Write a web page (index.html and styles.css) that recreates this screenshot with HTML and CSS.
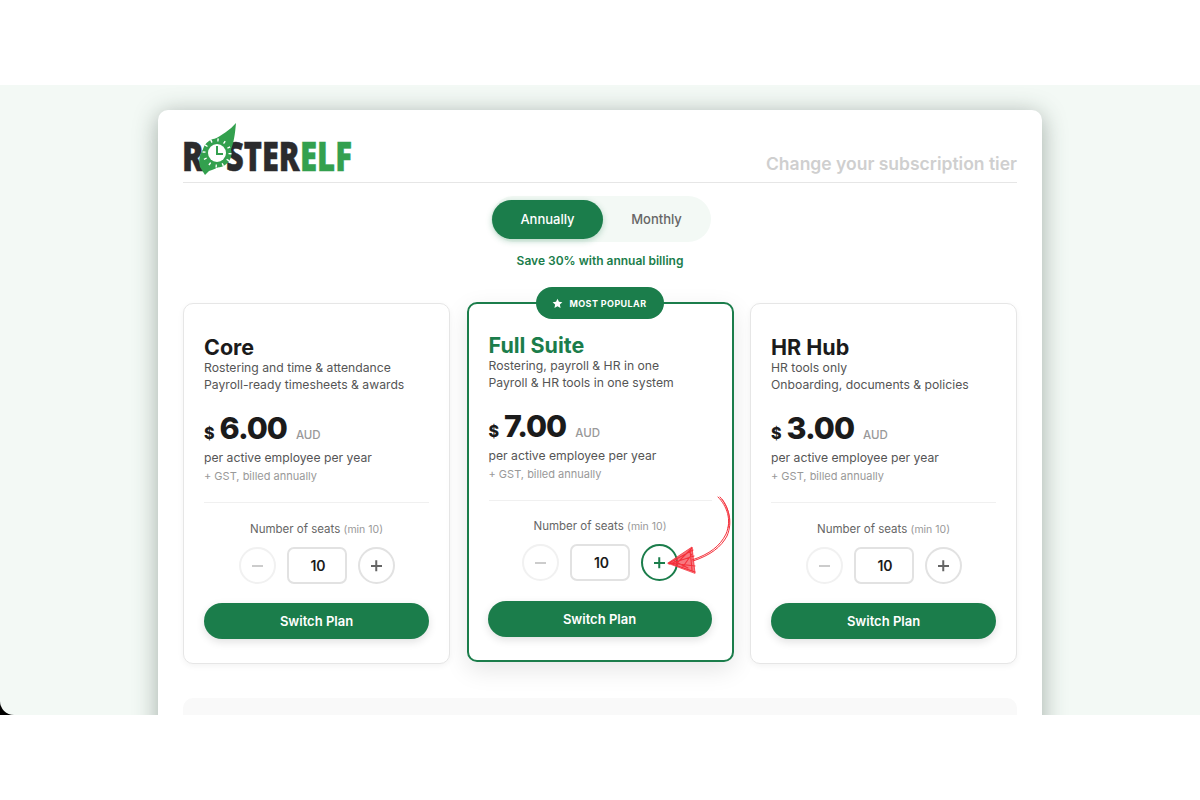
FILE: index.html
```html
<!DOCTYPE html>
<html lang="en">
<head>
      <meta charset="UTF-8">
      <meta name="viewport" content="width=device-width, initial-scale=1.0">
      <title>Change your subscription tier</title>
      <link rel="stylesheet" href="styles.css">
</head>
<body>
      <div class="frame">
            <div class="screen">
                  <main class="sheet">
                        <header class="sheet-head">
                              <svg class="logo" viewBox="0 0 172 64" role="img" aria-label="RosterElf">
                                    <text class="logo-text" transform="translate(-1 50) scale(.78 1)">R</text>
                                    <text class="logo-text" transform="translate(43 50) scale(.75 1)">STER</text>
                                    <text class="logo-text green" transform="translate(117 50) scale(.76 1)">ELF</text>
                                    <path d="M53 2 C52 13 51 22 47 31 C43 42 34 48 26 50 L22 54 L17 46 C14 34 20 26 30 19 C39 14 47 9 53 2 Z" fill="#33a04e"/>
                                    <circle cx="34" cy="32" r="12" fill="none" stroke="#33a04e" stroke-width="5"/>
                                    <circle cx="34" cy="32" r="13" fill="none" stroke="#fff" stroke-width="3" stroke-dasharray="1.400 5.400"/>
                                    <circle cx="34" cy="32" r="9" fill="#fff"/>
                                    <path d="M34 25 V33 H40" fill="none" stroke="#33a04e" stroke-width="2"/>
                              </svg>
                              <h1 class="sheet-title">Change your subscription tier</h1>
                        </header>

                        <div class="billing">
                              <div class="billing-toggle">
                                    <span class="billing-opt active">Annually</span>
                                    <span class="billing-opt">Monthly</span>
                              </div>
                              <p class="billing-note">Save 30% with annual billing</p>
                        </div>

                        <section class="plans">
                              <article class="plan">
                                    <h2>Core</h2>
                                    <p class="plan-desc">Rostering and time &amp; attendance<br>Payroll-ready timesheets &amp; awards</p>
                                    <div class="price"><span class="cur">$</span><span class="amt">6.00</span><span class="aud">AUD</span></div>
                                    <p class="per">per active employee per year</p>
                                    <p class="gst">+ GST, billed annually</p>
                                    <hr class="rule">
                                    <p class="seats">Number of seats <small>(min 10)</small></p>
                                    <div class="stepper">
                                          <span class="step off"><i class="minus"></i></span>
                                          <span class="seat-box">10</span>
                                          <span class="step"><i class="minus"></i><i class="minus upright"></i></span>
                                    </div>
                                    <button class="switch">Switch Plan</button>
                              </article>

                              <article class="plan featured">
                                    <div class="badge">
                                          <svg viewBox="0 0 24 24" aria-hidden="true"><path d="M12 1.500l3.200 6.900 7.500.9-5.500 5.100 1.500 7.400L12 18.100l-6.700 3.700 1.500-7.400L1.300 9.300l7.500-.9z" fill="#fff"/></svg>
                                          MOST POPULAR
                                    </div>
                                    <h2>Full Suite</h2>
                                    <p class="plan-desc">Rostering, payroll &amp; HR in one<br>Payroll &amp; HR tools in one system</p>
                                    <div class="price"><span class="cur">$</span><span class="amt">7.00</span><span class="aud">AUD</span></div>
                                    <p class="per">per active employee per year</p>
                                    <p class="gst">+ GST, billed annually</p>
                                    <hr class="rule">
                                    <p class="seats">Number of seats <small>(min 10)</small></p>
                                    <div class="stepper">
                                          <span class="step off"><i class="minus"></i></span>
                                          <span class="seat-box">10</span>
                                          <span class="step on"><i class="minus"></i><i class="minus upright"></i></span>
                                    </div>
                                    <button class="switch">Switch Plan</button>
                                    <!-- hand drawn arrow pointing at the plus -->
                                    <svg class="scribble" viewBox="0 0 70 80" aria-hidden="true" fill="none" stroke="#f4303a" stroke-linecap="round">
                                          <path d="M52 1 C61 10 66 24 60 38 C54 50 44 58 26 64" stroke-width="1"/>
                                          <path d="M54 1 C63 11 67 26 61 40 C55 51 45 59 27 65" stroke-width="1"/>
                                          <path d="M56 3 C63 12 65 24 62 32" stroke-width=".8"/>
                                          <path d="M2 67 L26 51 L29 77 Z" fill="#f4303a" fill-opacity=".65" stroke-width=".8"/>
                                          <path d="M3 67 L27 54 M3 68 L28 60 M4 67 L29 70 M6 68 L29 76 M26 52 L10 68 M26 58 L16 72 M8 65 L22 72 M24 54 L26 74" stroke-width="1.100"/>
                                    </svg>
                              </article>

                              <article class="plan">
                                    <h2>HR Hub</h2>
                                    <p class="plan-desc">HR tools only<br>Onboarding, documents &amp; policies</p>
                                    <div class="price"><span class="cur">$</span><span class="amt">3.00</span><span class="aud">AUD</span></div>
                                    <p class="per">per active employee per year</p>
                                    <p class="gst">+ GST, billed annually</p>
                                    <hr class="rule">
                                    <p class="seats">Number of seats <small>(min 10)</small></p>
                                    <div class="stepper">
                                          <span class="step off"><i class="minus"></i></span>
                                          <span class="seat-box">10</span>
                                          <span class="step"><i class="minus"></i><i class="minus upright"></i></span>
                                    </div>
                                    <button class="switch">Switch Plan</button>
                              </article>
                        </section>

                        <div class="next-panel"></div>
                  </main>
            </div>
      </div>
</body>
</html>
```

FILE: styles.css
```css
:root {
	--green: #1b7d4b;
	--leaf: #33a04e;
	--mint: #f3f9f5;
	--ink: #1b1b1b;
	--text: #555;
	--muted: #999;
	--line: #e6e6e6;
}
html {
	box-sizing: border-box;
}
*, *:before, *:after {
	box-sizing: inherit;
}
body {
	margin: 0;
	height: 800px;
	background: #fff;
	font-family: Inter, "Open Sans", sans-serif;
	color: var(--ink);
	overflow: hidden;
}
p, h1, h2 {
	margin: 0;
}

/* screenshot band */
.frame {
	margin-top: 85px;
	height: 630px;
	background: linear-gradient(90deg, #000 14px, #fff 14px);
	overflow: hidden;
}
.screen {
	height: 630px;
	background: var(--mint);
	border-bottom-left-radius: 14px;
	padding-top: 25px;
	overflow: hidden;
}
.sheet {
	width: 884px;
	height: 640px;
	margin: 0 auto;
	padding: 0 25px;
	background: #fff;
	border-radius: 10px;
	box-shadow: 0 4px 24px rgba(40, 60, 50, .4);
}

/* header */
.sheet-head {
	height: 73px;
	display: flex;
	justify-content: space-between;
	align-items: flex-end;
	border-bottom: 1px solid var(--line);
}
.logo {
	width: 172px;
	height: 64px;
	margin-bottom: -3px;
}
.logo-text {
	font-family: "Open Sans", sans-serif;
	font-weight: 800;
	font-size: 41px;
	fill: #2b2b2d;
	stroke: #2b2b2d;
	stroke-width: .5px;
}
.logo-text.green {
	fill: var(--leaf);
	stroke: var(--leaf);
}
.sheet-title {
	padding-bottom: 8px;
	font-size: 17.500px;
	line-height: 20px;
	font-weight: 600;
	color: #cfcfcf;
}

/* billing switch */
.billing {
	display: flex;
	flex-direction: column;
	align-items: center;
	padding-top: 13px;
}
.billing-toggle {
	width: 220px;
	height: 46px;
	margin-left: 2px;
	display: flex;
	align-items: center;
	padding: 0 1px;
	background: var(--mint);
	border-radius: 23px;
}
.billing-opt {
	flex: 1;
	height: 39px;
	display: flex;
	align-items: center;
	justify-content: center;
	border-radius: 20px;
	font-size: 13px;
	font-weight: 500;
	color: #666;
}
.billing-opt.active {
	flex: 0 0 111px;
	background: var(--green);
	color: #fff;
	box-shadow: 0 2px 6px rgba(27, 125, 75, .3);
}
.billing-note {
	margin-top: 11px;
	font-size: 12px;
	line-height: 16px;
	font-weight: 600;
	color: var(--green);
}

/* plan cards */
.plans {
	display: grid;
	grid-template-columns: repeat(3, 267px);
	justify-content: space-between;
	margin-top: 34px;
}
.plan {
	position: relative;
	height: 361px;
	padding: 31px 20px 0;
	background: #fff;
	border: 1px solid var(--line);
	border-radius: 10px;
	box-shadow: 0 2px 6px rgba(0, 0, 0, .05);
}
.plan.featured {
	height: 360px;
	margin-top: -1px;
	padding: 29px 20px 0;
	border: 2px solid var(--green);
	box-shadow: 0 8px 24px rgba(0, 0, 0, .1);
}
.plan h2 {
	font-size: 21.500px;
	line-height: 24px;
	font-weight: 700;
}
.featured h2 {
	color: var(--green);
}
.plan-desc {
	font-size: 12.200px;
	line-height: 17px;
	color: var(--text);
}
.price {
	display: flex;
	align-items: baseline;
	margin-top: 16px;
	height: 38px;
	line-height: 38px;
}
.cur {
	font-size: 16px;
	font-weight: 800;
	margin-right: 5px;
}
.amt {
	font-size: 30.500px;
	font-weight: 800;
	letter-spacing: -1px;
}
.aud {
	margin-left: 9px;
	font-size: 11.500px;
	font-weight: 500;
	color: var(--muted);
}
.per {
	margin-top: 3px;
	font-size: 12.200px;
	line-height: 16px;
	color: var(--text);
}
.gst {
	margin-top: 2px;
	font-size: 11px;
	line-height: 16px;
	color: var(--muted);
}
.rule {
	margin: 18px 0 0;
	border: 0;
	border-top: 1px solid #f0f0f0;
}
.seats {
	margin-top: 18px;
	text-align: center;
	font-size: 11.500px;
	line-height: 16px;
	color: #666;
}
.featured .seats {
	margin-top: 17px;
}
.seats small {
	font-size: 10.500px;
	color: var(--muted);
}
.stepper {
	display: flex;
	justify-content: center;
	gap: 11px;
	margin-top: 9px;
}
.step {
	position: relative;
	width: 37px;
	height: 37px;
	border: 2px solid #e2e2e2;
	border-radius: 50%;
}
.step.off {
	border-color: #f1f1f1;
}
.step.on {
	border-color: var(--green);
}
.minus {
	position: absolute;
	left: 11px;
	top: 16px;
	width: 11px;
	height: 1.500px;
	background: #666;
}
.minus.upright {
	transform: rotate(90deg);
}
.off .minus {
	background: #ccc;
}
.on .minus {
	background: var(--green);
}
.seat-box {
	width: 60px;
	height: 37px;
	display: flex;
	align-items: center;
	justify-content: center;
	padding-left: 3px;
	border: 2px solid #e2e2e2;
	border-radius: 7px;
	font-size: 14px;
	font-weight: 600;
}
.switch {
	display: block;
	width: 225px;
	height: 36px;
	margin-top: 19px;
	border: 0;
	border-radius: 18px;
	background: var(--green);
	color: #fff;
	font-family: inherit;
	font-size: 13px;
	font-weight: 600;
	box-shadow: 0 3px 8px rgba(0, 0, 0, .12);
}
.featured .switch {
	width: 224px;
	margin: 20px 0 0 -1px;
}

/* bits lying over the featured card */
.badge {
	position: absolute;
	left: 67px;
	top: -17px;
	width: 128px;
	height: 32px;
	display: flex;
	align-items: center;
	justify-content: center;
	gap: 6px;
	border-radius: 16px;
	background: var(--green);
	color: #fff;
	font-size: 9px;
	font-weight: 700;
	letter-spacing: .4px;
}
.badge svg {
	width: 11px;
	height: 11px;
}
.scribble {
	position: absolute;
	left: 197px;
	top: 192px;
	width: 70px;
	height: 80px;
}

.next-panel {
	height: 40px;
	margin-top: 34px;
	background: #f9f9f9;
	border-radius: 10px;
}
```
